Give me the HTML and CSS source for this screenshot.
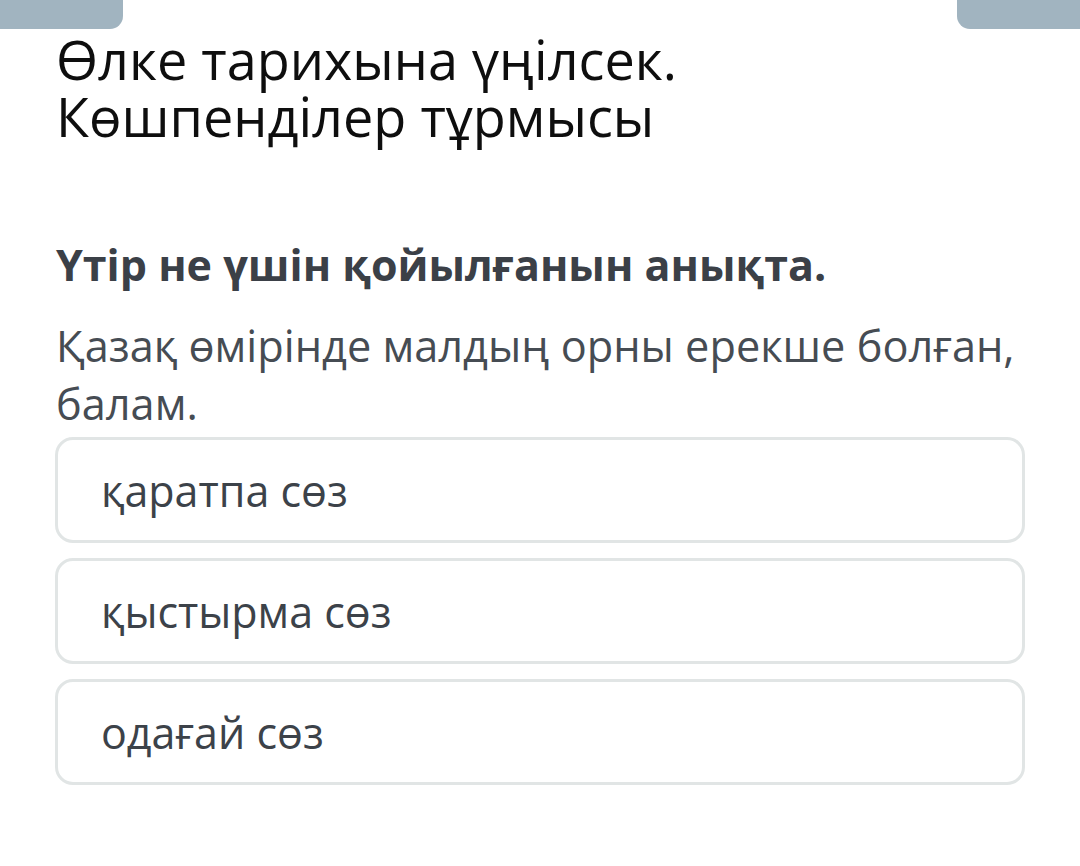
FILE: index.html
```html
<!DOCTYPE html>
<html lang="kk">
<head>
<meta charset="utf-8">
<link rel="stylesheet" href="styles.css">
</head>
<body>
<div class="page">
  <div class="tabs">
    <div class="tab tab-left"></div>
    <div class="tab tab-right"></div>
  </div>
  <main class="content">
    <h1 class="title">Өлке тарихына үңілсек.<br>Көшпенділер тұрмысы</h1>
    <h2 class="question">Үтір не үшін қойылғанын анықта.</h2>
    <p class="sentence">Қазақ өмірінде малдың орны ерекше болған, балам.</p>
    <div class="options">
      <div class="option">қаратпа сөз</div>
      <div class="option">қыстырма сөз</div>
      <div class="option">одағай сөз</div>
    </div>
  </main>
</div>
</body>
</html>
```
FILE: styles.css
```css
html, body {
  margin: 0;
  padding: 0;
  background: #ffffff;
}
body {
  font-family: "Open Sans", "Noto Sans", sans-serif;
  width: 1080px;
  height: 866px;
  overflow: hidden;
}
.tabs {
  display: flex;
  justify-content: space-between;
  height: 29px;
}
.tab {
  width: 123px;
  height: 29px;
  background: #a1b4c0;
}
.tab-left {
  border-bottom-right-radius: 13px;
}
.tab-right {
  border-bottom-left-radius: 13px;
}
.content {
  padding: 0 55px 0 55px;
}
.title {
  margin: 2px 0 0 1px;
  font-weight: 400;
  font-size: 54px;
  line-height: 57px;
  color: #0e0e0e;
}
.question {
  margin: 95px 0 0 1px;
  font-weight: 700;
  font-size: 43px;
  line-height: 50px;
  color: #3b4047;
}
.sentence {
  margin: 27px 0 0 1px;
  font-weight: 400;
  font-size: 43.3px;
  line-height: 58px;
  color: #464c53;
}
.options {
  display: flex;
  flex-direction: column;
  gap: 15px;
  margin-top: 4px;
}
.option {
  box-sizing: border-box;
  height: 106px;
  border: 3px solid #e1e5e5;
  border-radius: 18px;
  padding: 0 0 0 43px;
  display: flex;
  align-items: center;
  font-size: 43px;
  color: #3c4249;
}
```
